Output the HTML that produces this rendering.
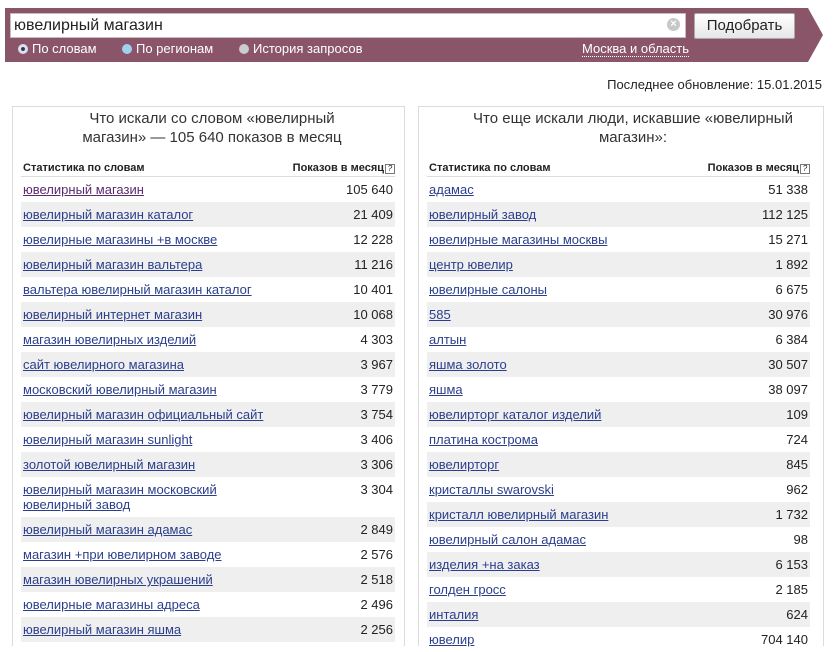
<!DOCTYPE html>
<html><head><meta charset="utf-8"><style>
*{margin:0;padding:0;box-sizing:border-box}
body{width:836px;height:636px;overflow:hidden;background:#fff;font-family:"Liberation Sans",Arial,sans-serif;position:relative}
.bar{position:absolute;left:5px;top:8px;width:820px;height:54px;background:#8b5569;clip-path:polygon(0 0,803px 0,818px 27px,803px 54px,0 54px)}
.inp{position:absolute;left:10px;top:13px;width:676px;height:25px;background:#fff;border:1px solid #c9b9c0;font-size:16px;line-height:23px;padding-left:3px;color:#222}
.clr{position:absolute;left:667px;top:18px;width:13px;height:13px;border-radius:50%;background:#c8c8c8;color:#fff;font-size:11px;line-height:13px;text-align:center;font-weight:bold}
.btn{position:absolute;left:694px;top:13px;width:101px;height:26px;background:linear-gradient(#fff,#e6e6e6);border:1px solid #aaa;border-radius:2px;font-size:15px;text-align:center;line-height:24px;color:#222}
.rad{position:absolute;top:42px;font-size:13px;color:#fff;line-height:14px}
.rad i{display:inline-block;width:10px;height:10px;border-radius:50%;vertical-align:-1px;margin-right:4px}
.upd{position:absolute;right:14px;top:77px;font-size:13px;color:#222}
.panel{position:absolute;top:106px;border:1px solid #dcdcdc;border-bottom:none;height:540px}
.ttl{font-size:15px;text-align:center;color:#333;line-height:19px;position:absolute;top:4px}
.hd{position:absolute;top:162px;font-size:11px;font-weight:bold;color:#222;border-bottom:1px solid #ddd;height:15px;padding-left:2px}
.hd span{position:absolute;right:0}
.q{display:inline-block;width:10px;height:10px;border:1px solid #777;font-size:8px;line-height:8px;text-align:center;font-weight:normal;margin-left:1px}
.rows{position:absolute;top:177px}
.r{position:relative;height:25px;font-size:13px;line-height:25px}
.r:nth-child(even){background:#efefef}
.r a{color:#2b3f8c;text-decoration:underline;margin-left:2px;display:inline-block}
.r b{font-weight:normal;position:absolute;right:2px;top:0;color:#222}
.r.two{height:40px;line-height:15px;padding-top:5px}
.r.two b{top:5px}
</style></head><body>
<div class="bar"></div>
<div class="inp">ювелирный магазин</div>
<div class="clr">×</div>
<div class="btn">Подобрать</div>
<div class="rad" style="left:18px"><i style="background:#fff;border:3px solid #dde;box-shadow:inset 0 0 0 2px #335"></i>По словам</div>
<div class="rad" style="left:122px"><i style="background:#9fd0f0"></i>По регионам</div>
<div class="rad" style="left:239px"><i style="background:#ccc"></i>История запросов</div>
<div class="rad" style="left:582px;border-bottom:1px dotted #fff">Москва и область</div>
<div class="upd">Последнее обновление: 15.01.2015</div>

<div class="panel" style="left:12px;width:393px"></div>
<div class="ttl" style="left:62px;width:300px;top:109px">Что искали со словом «ювелирный магазин» — 105 640 показов в месяц</div>
<div class="hd" style="left:21px;width:374px">Статистика по словам<span>Показов в месяц<i class="q">?</i></span></div>
<div class="rows" style="left:21px;width:374px">
<div class="r"><a style="color:#5a2a6e">ювелирный магазин</a><b>105 640</b></div>
<div class="r"><a>ювелирный магазин каталог</a><b>21 409</b></div>
<div class="r"><a>ювелирные магазины +в москве</a><b>12 228</b></div>
<div class="r"><a>ювелирный магазин вальтера</a><b>11 216</b></div>
<div class="r"><a>вальтера ювелирный магазин каталог</a><b>10 401</b></div>
<div class="r"><a>ювелирный интернет магазин</a><b>10 068</b></div>
<div class="r"><a>магазин ювелирных изделий</a><b>4 303</b></div>
<div class="r"><a>сайт ювелирного магазина</a><b>3 967</b></div>
<div class="r"><a>московский ювелирный магазин</a><b>3 779</b></div>
<div class="r"><a>ювелирный магазин официальный сайт</a><b>3 754</b></div>
<div class="r"><a>ювелирный магазин sunlight</a><b>3 406</b></div>
<div class="r"><a>золотой ювелирный магазин</a><b>3 306</b></div>
<div class="r two"><a>ювелирный магазин московский<br>ювелирный завод</a><b>3 304</b></div>
<div class="r"><a>ювелирный магазин адамас</a><b>2 849</b></div>
<div class="r"><a>магазин +при ювелирном заводе</a><b>2 576</b></div>
<div class="r"><a>магазин ювелирных украшений</a><b>2 518</b></div>
<div class="r"><a>ювелирные магазины адреса</a><b>2 496</b></div>
<div class="r"><a>ювелирный магазин яшма</a><b>2 256</b></div>
</div>

<div class="panel" style="left:418px;width:406px"></div>
<div class="ttl" style="left:450px;width:366px;top:109px">Что еще искали люди, искавшие «ювелирный магазин»:</div>
<div class="hd" style="left:427px;width:383px">Статистика по словам<span>Показов в месяц<i class="q">?</i></span></div>
<div class="rows" style="left:427px;width:383px">
<div class="r"><a>адамас</a><b>51 338</b></div>
<div class="r"><a>ювелирный завод</a><b>112 125</b></div>
<div class="r"><a>ювелирные магазины москвы</a><b>15 271</b></div>
<div class="r"><a>центр ювелир</a><b>1 892</b></div>
<div class="r"><a>ювелирные салоны</a><b>6 675</b></div>
<div class="r"><a>585</a><b>30 976</b></div>
<div class="r"><a>алтын</a><b>6 384</b></div>
<div class="r"><a>яшма золото</a><b>30 507</b></div>
<div class="r"><a>яшма</a><b>38 097</b></div>
<div class="r"><a>ювелирторг каталог изделий</a><b>109</b></div>
<div class="r"><a>платина кострома</a><b>724</b></div>
<div class="r"><a>ювелирторг</a><b>845</b></div>
<div class="r"><a>кристаллы swarovski</a><b>962</b></div>
<div class="r"><a>кристалл ювелирный магазин</a><b>1 732</b></div>
<div class="r"><a>ювелирный салон адамас</a><b>98</b></div>
<div class="r"><a>изделия +на заказ</a><b>6 153</b></div>
<div class="r"><a>голден гросс</a><b>2 185</b></div>
<div class="r"><a>инталия</a><b>624</b></div>
<div class="r"><a>ювелир</a><b>704 140</b></div>
</div>
</body></html>
